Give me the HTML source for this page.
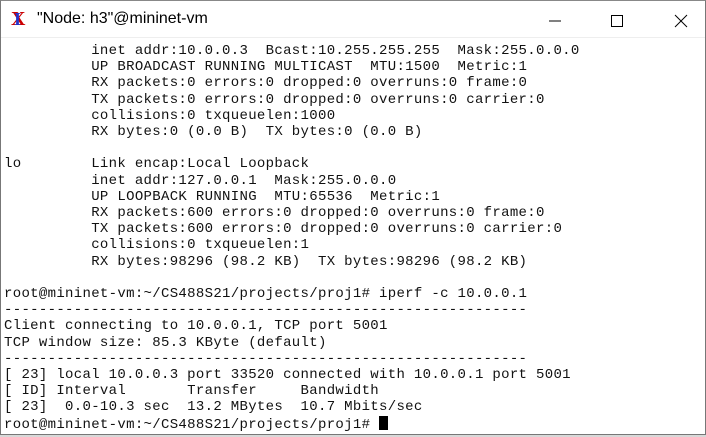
<!DOCTYPE html>
<html><head><style>
html,body{margin:0;padding:0;width:706px;height:437px;overflow:hidden;background:#d8d8d8;}
.win{position:absolute;left:0;top:0;width:704px;height:433px;border:1px solid #777;border-top:1px solid #888;background:#fff;}
.title{position:absolute;left:0;top:0;width:704px;height:36px;background:#fff;border-bottom:1px solid #eee;font-family:"Liberation Sans",sans-serif;font-size:16px;color:#000;}
.title .t{position:absolute;left:36px;top:9px;}
.logo{position:absolute;left:10px;top:8px;font-family:"Liberation Serif",serif;font-weight:bold;font-size:20px;color:#c00;line-height:20px;}
.logo span{position:absolute;left:3px;top:0;color:#2233cc;font-size:18px;}
pre{position:absolute;left:3px;top:42px;margin:0;font-family:"Liberation Mono",monospace;font-size:14px;letter-spacing:0.32px;line-height:16.2px;color:#111;}
.cur{display:inline-block;width:9px;height:14px;background:#000;vertical-align:-2px;}
</style></head><body>
<div class="win">
<div class="title"><div class="logo">X<span>I</span></div><div class="t">"Node: h3"@mininet-vm</div>
<svg style="position:absolute;left:548px;top:12px" width="150" height="16"><line x1="0" y1="8" x2="12" y2="8" stroke="#000" stroke-width="1"/><rect x="62.5" y="2.5" width="11" height="11" fill="none" stroke="#000"/><line x1="126" y1="2" x2="138" y2="14" stroke="#000"/><line x1="138" y1="2" x2="126" y2="14" stroke="#000"/></svg>
</div>
<pre>          inet addr:10.0.0.3  Bcast:10.255.255.255  Mask:255.0.0.0
          UP BROADCAST RUNNING MULTICAST  MTU:1500  Metric:1
          RX packets:0 errors:0 dropped:0 overruns:0 frame:0
          TX packets:0 errors:0 dropped:0 overruns:0 carrier:0
          collisions:0 txqueuelen:1000
          RX bytes:0 (0.0 B)  TX bytes:0 (0.0 B)

lo        Link encap:Local Loopback
          inet addr:127.0.0.1  Mask:255.0.0.0
          UP LOOPBACK RUNNING  MTU:65536  Metric:1
          RX packets:600 errors:0 dropped:0 overruns:0 frame:0
          TX packets:600 errors:0 dropped:0 overruns:0 carrier:0
          collisions:0 txqueuelen:1
          RX bytes:98296 (98.2 KB)  TX bytes:98296 (98.2 KB)

root@mininet-vm:~/CS488S21/projects/proj1# iperf -c 10.0.0.1
------------------------------------------------------------
Client connecting to 10.0.0.1, TCP port 5001
TCP window size: 85.3 KByte (default)
------------------------------------------------------------
[ 23] local 10.0.0.3 port 33520 connected with 10.0.0.1 port 5001
[ ID] Interval       Transfer     Bandwidth
[ 23]  0.0-10.3 sec  13.2 MBytes  10.7 Mbits/sec
root@mininet-vm:~/CS488S21/projects/proj1# <span class="cur"></span></pre>
</div>
</body></html>
